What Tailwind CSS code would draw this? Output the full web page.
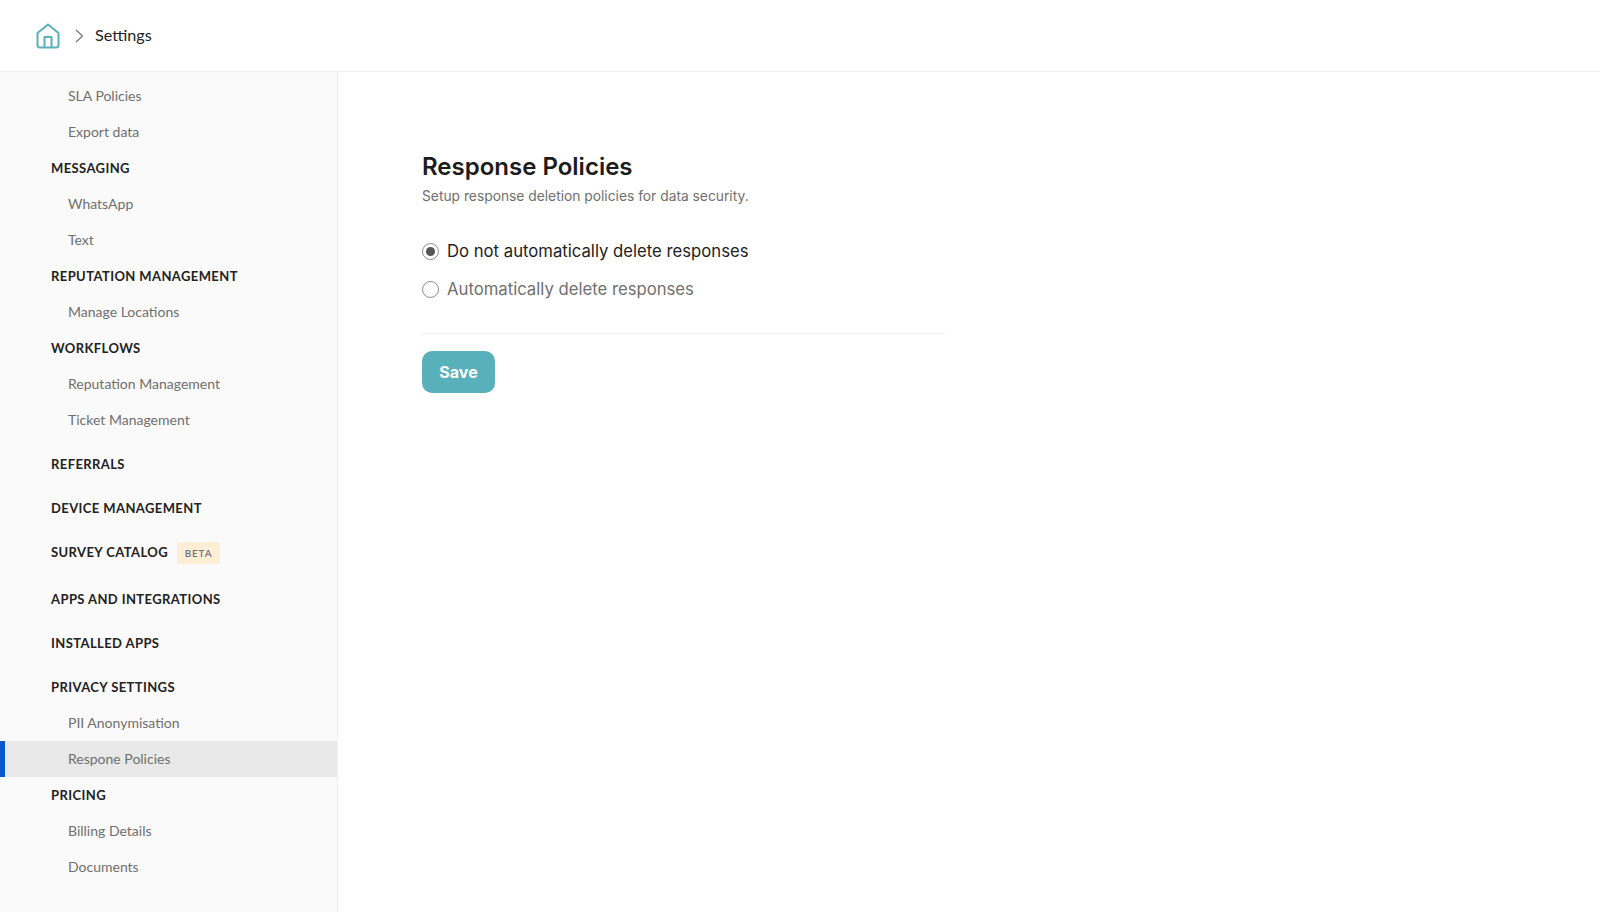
<!DOCTYPE html>
<html lang="en">
<head>
  <meta charset="UTF-8" />
  <title>Settings</title>
  <script src="https://cdn.jsdelivr.net/npm/@tailwindcss/browser@4"></script>
</head>
<body class="bg-white h-[912px] overflow-hidden font-['Lato',sans-serif]">

  <header class="h-[72px] flex items-center pl-[36px] border-b border-[#f1f1f1]">
    <svg class="w-[24px] h-[26px]" viewBox="0 0 24 26" fill="none" stroke="#5bb0bb" stroke-width="2" stroke-linejoin="round">
      <path d="M12 1.5 L22.5 10 V22 A2.5 2.5 0 0 1 20 24.5 H4 A2.5 2.5 0 0 1 1.5 22 V10 Z" />
      <path d="M8.5 24.5 V14 H15.5 V24.5" />
    </svg>
    <svg class="w-[12px] h-[14px] ml-[13px]" viewBox="0 0 12 14" fill="none" stroke="#777" stroke-width="1.2">
      <path d="M3 1 L9.5 7 L3 13" />
    </svg>
    <span class="ml-[10px] mb-[1px] text-[16.2px] text-[#222]">Settings</span>
  </header>

  <div class="flex h-[840px]">
    <nav class="w-[338px] shrink-0 bg-[#fafafa] border-r border-[#f1f1f1] pt-[6px] text-[14px] text-[#6f6f6f]">
      <div class="h-[36px] flex items-center pl-[68px] pb-[2px]">SLA Policies</div>
      <div class="h-[36px] flex items-center pl-[68px] pb-[2px]">Export data</div>
      <div class="h-[36px] flex items-center pl-[51px] pt-[2px] font-bold text-[#222] text-[13px] tracking-[0.4px]">MESSAGING</div>
      <div class="h-[36px] flex items-center pl-[68px] pb-[2px]">WhatsApp</div>
      <div class="h-[36px] flex items-center pl-[68px] pb-[2px]">Text</div>
      <div class="h-[36px] flex items-center pl-[51px] pt-[2px] font-bold text-[#222] text-[13px] tracking-[0.4px]">REPUTATION MANAGEMENT</div>
      <div class="h-[36px] flex items-center pl-[68px] pb-[2px]">Manage Locations</div>
      <div class="h-[36px] flex items-center pl-[51px] pt-[2px] font-bold text-[#222] text-[13px] tracking-[0.4px]">WORKFLOWS</div>
      <div class="h-[36px] flex items-center pl-[68px] pb-[2px]">Reputation Management</div>
      <div class="h-[36px] flex items-center pl-[68px] pb-[2px]">Ticket Management</div>
      <div class="h-[36px] flex items-center pl-[51px] pt-[2px] mt-[8px] font-bold text-[#222] text-[13px] tracking-[0.4px]">REFERRALS</div>
      <div class="h-[36px] flex items-center pl-[51px] pt-[2px] mt-[8px] font-bold text-[#222] text-[13px] tracking-[0.4px]">DEVICE MANAGEMENT</div>
      <div class="h-[36px] flex items-center pl-[51px] pt-[2px] mt-[8px] font-bold text-[#222] text-[13px] tracking-[0.4px]">
        SURVEY CATALOG
        <span class="ml-[9px] h-[22px] w-[43px] flex items-center justify-center rounded-[3px] bg-[#fdeed5] text-[10px] font-semibold text-[#6b7280] tracking-[0.8px]">BETA</span>
      </div>
      <div class="h-[36px] flex items-center pl-[51px] pt-[2px] mt-[11px] font-bold text-[#222] text-[13px] tracking-[0.4px]">APPS AND INTEGRATIONS</div>
      <div class="h-[36px] flex items-center pl-[51px] pt-[2px] mt-[8px] font-bold text-[#222] text-[13px] tracking-[0.4px]">INSTALLED APPS</div>
      <div class="h-[36px] flex items-center pl-[51px] pt-[2px] mt-[8px] font-bold text-[#222] text-[13px] tracking-[0.4px]">PRIVACY SETTINGS</div>
      <div class="h-[36px] flex items-center pl-[68px] pb-[2px]">PII Anonymisation</div>
      <div class="h-[36px] flex items-center pl-[63px] pb-[2px] bg-[#e9e9e9] border-l-[5px] border-[#0b57d0]">Respone Policies</div>
      <div class="h-[36px] flex items-center pl-[51px] pt-[2px] font-bold text-[#222] text-[13px] tracking-[0.4px]">PRICING</div>
      <div class="h-[36px] flex items-center pl-[68px] pb-[2px]">Billing Details</div>
      <div class="h-[36px] flex items-center pl-[68px] pb-[2px]">Documents</div>
    </nav>

    <main class="pl-[84px] pt-[80px] font-['Inter',sans-serif]">
      <h1 class="text-[24px] leading-[30px] font-semibold text-[#1c1c1c]">Response Policies</h1>
      <p class="mt-[4px] text-[13.8px] leading-[20px] text-[#6f6f6f]">Setup response deletion policies for data security.</p>

      <div class="w-[523px] mt-[26px] pb-[25px] border-b border-[#f1f1f1]">
        <label class="flex items-center h-[38px] text-[16.7px] text-[#222]">
          <span class="w-[17px] h-[17px] rounded-full border border-[#8a8a8a] flex items-center justify-center">
            <span class="w-[9px] h-[9px] rounded-full bg-[#555]"></span>
          </span>
          <span class="ml-[8px] pt-[2px]">Do not automatically delete responses</span>
        </label>
        <label class="flex items-center h-[38px] text-[16.7px] text-[#6f6f6f]">
          <span class="w-[17px] h-[17px] rounded-full border border-[#8a8a8a]"></span>
          <span class="ml-[8px] pt-[2px]">Automatically delete responses</span>
        </label>
      </div>

      <button class="mt-[17px] w-[73px] h-[42px] rounded-[10px] bg-[#58b0bb] text-white text-[16px] font-bold">Save</button>
    </main>
  </div>
</body>
</html>
